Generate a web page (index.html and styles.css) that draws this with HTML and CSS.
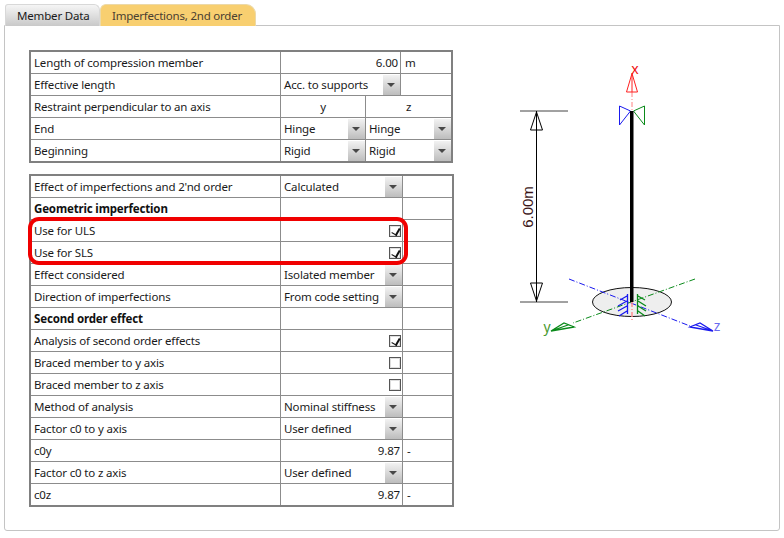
FILE: index.html
```html
<!DOCTYPE html>
<html lang="en">
<head>
<meta charset="utf-8">
<title>Imperfections, 2nd order</title>
<link rel="stylesheet" href="styles.css">
</head>
<body>
<div class="tabs">
  <div class="tab tab-grey">Member Data</div>
  <div class="tab tab-active">Imperfections, 2nd order</div>
</div>
<div class="panel">
  <div class="tables">
    <div class="table t1">
      <div class="row"><div class="c lab">Length of compression member</div><div class="c val num">6.00</div><div class="c unit">m</div></div>
      <div class="row"><div class="c lab">Effective length</div><div class="c val"><div class="combo"><span>Acc. to supports</span><i class="btn"></i></div></div><div class="c unit"></div></div>
      <div class="row"><div class="c lab">Restraint perpendicular to an axis</div><div class="c half ctr">y</div><div class="c half2 ctr">z</div></div>
      <div class="row"><div class="c lab">End</div><div class="c half"><div class="combo"><span>Hinge</span><i class="btn"></i></div></div><div class="c half2"><div class="combo"><span>Hinge</span><i class="btn"></i></div></div></div>
      <div class="row"><div class="c lab">Beginning</div><div class="c half"><div class="combo"><span>Rigid</span><i class="btn"></i></div></div><div class="c half2"><div class="combo"><span>Rigid</span><i class="btn"></i></div></div></div>
    </div>
    <div class="table t2">
      <div class="row"><div class="c lab">Effect of imperfections and 2'nd order</div><div class="c val"><div class="combo"><span>Calculated</span><i class="btn"></i></div></div><div class="c unit"></div></div>
      <div class="row"><div class="c lab bold">Geometric imperfection</div><div class="c val"></div><div class="c unit"></div></div>
      <div class="row"><div class="c lab">Use for ULS</div><div class="c val chk"><i class="box on"></i></div><div class="c unit"></div></div>
      <div class="row"><div class="c lab">Use for SLS</div><div class="c val chk"><i class="box on"></i></div><div class="c unit"></div></div>
      <div class="row"><div class="c lab">Effect considered</div><div class="c val"><div class="combo"><span>Isolated member</span><i class="btn"></i></div></div><div class="c unit"></div></div>
      <div class="row"><div class="c lab">Direction of imperfections</div><div class="c val"><div class="combo"><span>From code setting</span><i class="btn"></i></div></div><div class="c unit"></div></div>
      <div class="row"><div class="c lab bold">Second order effect</div><div class="c val"></div><div class="c unit"></div></div>
      <div class="row"><div class="c lab">Analysis of second order effects</div><div class="c val chk"><i class="box on"></i></div><div class="c unit"></div></div>
      <div class="row"><div class="c lab">Braced member to y axis</div><div class="c val chk"><i class="box"></i></div><div class="c unit"></div></div>
      <div class="row"><div class="c lab">Braced member to z axis</div><div class="c val chk"><i class="box"></i></div><div class="c unit"></div></div>
      <div class="row"><div class="c lab">Method of analysis</div><div class="c val"><div class="combo"><span>Nominal stiffness</span><i class="btn"></i></div></div><div class="c unit"></div></div>
      <div class="row"><div class="c lab">Factor c0 to y axis</div><div class="c val"><div class="combo"><span>User defined</span><i class="btn"></i></div></div><div class="c unit"></div></div>
      <div class="row"><div class="c lab">c0y</div><div class="c val num">9.87</div><div class="c unit">-</div></div>
      <div class="row"><div class="c lab">Factor c0 to z axis</div><div class="c val"><div class="combo"><span>User defined</span><i class="btn"></i></div></div><div class="c unit"></div></div>
      <div class="row"><div class="c lab">c0z</div><div class="c val num">9.87</div><div class="c unit">-</div></div>
    </div>
    <div class="highlight"></div>
  </div>
  <svg class="diagram" width="250" height="300" viewBox="500 50 250 300" xmlns="http://www.w3.org/2000/svg">
    <ellipse cx="632" cy="302" rx="39.500" ry="14.500" fill="#eeeeee" stroke="#111" stroke-width="1"/>
    <g fill="none" stroke="#000" stroke-width="1">
      <path d="M520 111H568M520 302H568" stroke="#444"/>
      <path d="M536.500 111V302"/>
      <path d="M536.500 112L530.500 130H542.500Z"/>
      <path d="M536.500 301L530.500 283H542.500Z"/>
    </g>
    <text class="dim" transform="translate(533 207) rotate(-90)" text-anchor="middle">6.00m</text>
    <g fill="none" stroke-width="1">
      <path d="M632 92V110" stroke="#ff8080" stroke-dasharray="5 2 1 2"/>
      <path d="M632 73.500L626.500 92H637.500ZM632 73.500V92" stroke="#ff2020"/>
      <path d="M630.500 111L619.500 106V125Z" stroke="#1a1aee"/>
      <path d="M633.500 111L644.500 106V125Z" stroke="#0a8a1a"/>
      <path d="M569 279L690 326" stroke="#1a1aee" stroke-dasharray="6 2 1 2"/>
      <path d="M695 279L573 323" stroke="#0a8a1a" stroke-dasharray="6 2 1 2"/>
      <path d="M632 302V322" stroke="#ff9090" stroke-width="1.500" stroke-dasharray="5 2 1 2"/>
      <path d="M551 331L564 323L574 327ZM551 331L574 327M551 331L568 325" stroke="#0a8a1a" stroke-width="1.300"/>
      <path d="M713 331L700 323L690 327ZM713 331L690 327M713 331L696 325" stroke="#1a1aee" stroke-width="1.300"/>
      <path d="M627.500 294V314M627 296L620 300M627 301L618 306M627 306L618 311M627 311L619 316" stroke="#1a1aee" stroke-width="1.300"/>
      <path d="M637.500 294V314M638 296L645 300M638 301L646 306M638 306L646 311M638 311L645 316" stroke="#0a8a1a" stroke-width="1.300"/>
    </g>
    <rect x="630" y="111" width="3.500" height="191" fill="#000"/>
    <text class="axis ax-x" x="635" y="74" text-anchor="middle">x</text>
    <text class="axis ax-y" x="547" y="332" text-anchor="middle">y</text>
    <text class="axis ax-z" x="717" y="331" text-anchor="middle">z</text>
  </svg>
</div>
</body>
</html>
```
FILE: styles.css
```css
* { box-sizing: border-box; }
html, body { margin: 0; padding: 0; background: #fff; }
body {
  width: 784px;
  height: 538px;
  padding: 4px 4px 0;
  font: 11.5px/1 "Noto Sans", "Open Sans", sans-serif;
  letter-spacing: -0.16px;
  color: #1a1a1a;
  overflow: hidden;
}
.tabs { display: flex; height: 22px; padding-left: 1px; margin-bottom: -1px; position: relative; }
.tab {
  height: 22px;
  display: flex;
  align-items: center;
  padding: 1px 0 0 11px;
  white-space: nowrap;
  border-radius: 3px 6px 0 0;
}
.tab-grey {
  width: 95px;
  background: linear-gradient(#f5f5f5, #c9c9c9);
  border: 1px solid #d8d8d8;
  border-bottom: 0;
}
.tab-active {
  width: 156px;
  background: #f8cf70;
  color: #4a4030;
  letter-spacing: -0.22px;
  border: 1px solid #ecd9a8;
  border-bottom: 0;
  border-radius: 6px 10px 0 0;
}
.panel {
  width: 776px;
  height: 506px;
  border: 1px solid #c4c4c4;
  border-radius: 0 0 3px 3px;
  background: #fff;
  display: flex;
  padding: 24px 0 0 24px;
}
.tables { position: relative; width: 441px; flex: none; }
.table {
  border: 2px solid #808080;
  background: #fff;
}
.t1 { width: 424px; margin-bottom: 11px; }
.t2 { width: 425px; }
.row { display: flex; height: 22px; border-bottom: 1px solid #8c8c8c; }
.row:last-child { height: 21px; border-bottom: 0; }
.c {
  display: flex;
  align-items: center;
  padding-top: 1px;
  border-right: 1px solid #8c8c8c;
  white-space: nowrap;
}
.c:last-child { border-right: 0; }
.lab { width: 250px; padding-left: 3px; flex: none; }
.val { width: 120px; flex: none; }
.t2 .val { width: 122px; }
.unit { flex: 1; padding-left: 4px; }
.half { width: 85px; flex: none; }
.half2 { flex: 1; }
.ctr { justify-content: center; }
.num { justify-content: flex-end; padding-right: 2px; }
.bold { font-weight: 700; color: #111; }
.chk { justify-content: flex-end; padding-right: 1px; }
.combo {
  flex: 1;
  height: 100%;
  display: flex;
  align-items: center;
  justify-content: space-between;
  padding-left: 3px;
  overflow: hidden;
}
.btn {
  width: 17px;
  height: 100%;
  flex: none;
  position: relative;
  background: linear-gradient(#f2f2f2, #bdbdbd);
}
.btn::after {
  content: "";
  position: absolute;
  left: 4px;
  top: 8px;
  border: 4px solid transparent;
  border-top: 4px solid #484848;
  border-bottom: 0;
}
.box {
  width: 12px;
  height: 12px;
  margin-top: -1px;
  border: 1px solid #555;
  box-shadow: inset 0 0 0 1px #dedede;
  background: #fff;
  position: relative;
}
.box.on::after {
  content: "";
  position: absolute;
  left: 3px;
  top: 1px;
  width: 4px;
  height: 7px;
  border: solid #111;
  border-width: 0 2px 1px 0;
  transform: rotate(30deg);
}
.highlight {
  position: absolute;
  left: -1px;
  top: 167px;
  width: 380px;
  height: 48px;
  border: 4px solid #f00000;
  border-radius: 11px;
}
.diagram { flex: none; margin: 0 0 0 30px; align-self: flex-start; }
.dim { font: 15px "Liberation Sans", sans-serif; letter-spacing: 0; fill: #3a1518; }
.axis { font: 14px "Noto Sans", sans-serif; letter-spacing: 0; }
.ax-x { fill: #f01010; }
.ax-y { fill: #4a9a30; }
.ax-z { fill: #6a6af0; }
```
